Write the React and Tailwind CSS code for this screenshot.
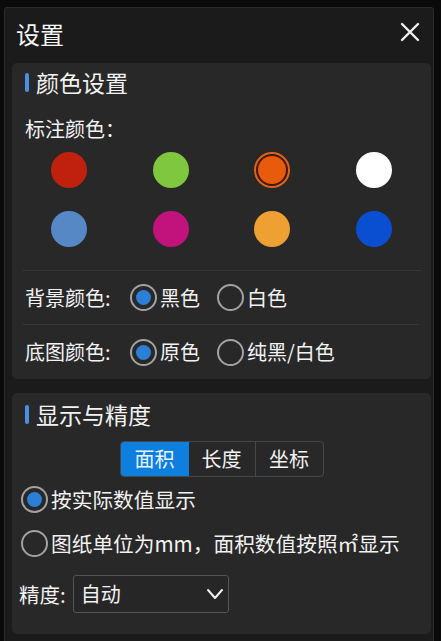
const FONT = { fontFamily: '"Noto Sans CJK SC", "Noto Sans", sans-serif' };

const MARK_COLORS = [
  '#c0210f',
  '#7ec73e',
  '#e85a0c',
  '#ffffff',
  '#5588c4',
  '#c2137c',
  '#eea033',
  '#0a4fd1',
];

function SectionTitle({ children }) {
  return (
    <div className="flex items-center h-[24px] pl-[13px]">
      <span className="w-[4px] h-[19px] rounded-[2px] bg-[#4a90e2]" />
      <span className="ml-[7px] text-[23px] leading-[24px] text-[#f2f2f2]">{children}</span>
    </div>
  );
}

function Radio({ checked }) {
  return (
    <span className="w-[27px] h-[27px] rounded-full border-2 border-[#a3a3a3] flex items-center justify-center shrink-0">
      {checked && <span className="w-[15px] h-[15px] rounded-full bg-[#2b7fd6]" />}
    </span>
  );
}

function Option({ checked, label, size = 'text-[20px]' }) {
  return (
    <div className="flex items-center gap-[3px]">
      <Radio checked={checked} />
      <span className={`${size} leading-[24px] text-[#f2f2f2]`}>{label}</span>
    </div>
  );
}

function OptionRow({ label, options, className }) {
  return (
    <div className={`flex items-center pl-[13px] ${className}`}>
      <span className="w-[105px] text-[20px] leading-[24px] text-[#f2f2f2]">{label}</span>
      <div className="flex items-center gap-[17px]">
        {options.map((o, i) => (
          <Option key={i} checked={i === 0} label={o} />
        ))}
      </div>
    </div>
  );
}

function Swatch({ color, selected }) {
  if (selected) {
    return (
      <span className="w-[36px] h-[36px] rounded-full border-2 border-[#e2621a] p-[2px] bg-[#3a1a0a]">
        <span className="block w-full h-full rounded-full bg-[#e85a0c]" />
      </span>
    );
  }
  return <span className="w-[36px] h-[36px] rounded-full" style={{ background: color }} />;
}

export default function App() {
  return (
    <div className="min-h-screen bg-[#0a0a0a] pt-[7px] pl-[4px] pr-[7px]" style={FONT}>
      <div className="h-[640px] border border-[#2c2c2c] rounded-t-[3px] bg-[#1b1b1b] pl-[7px] pr-[2px]">
        {/* Title */}
        <div className="h-[55px] flex items-start justify-between pt-[14px]">
          <span className="ml-[4px] text-[24px] leading-[24px] text-[#f5f5f5]">设置</span>
          <svg width="20" height="20" viewBox="0 0 20 20" className="mr-[11px]">
            <path d="M2 2 L18 18 M18 2 L2 18" stroke="#f0f0f0" strokeWidth="2.4" strokeLinecap="round" />
          </svg>
        </div>

        {/* Colour settings */}
        <div className="h-[316px] rounded-[5px] bg-[#282828] pt-[7px]">
          <SectionTitle>颜色设置</SectionTitle>
          <div className="mt-[23px] pl-[13px] text-[20px] leading-[24px] text-[#f2f2f2]">标注颜色：</div>
          <div className="mt-[11px] px-[6px] grid grid-cols-4 gap-y-[23px] justify-items-center">
            {MARK_COLORS.map((c, i) => (
              <Swatch key={i} color={c} selected={i === 2} />
            ))}
          </div>
          <div className="mt-[23px] mx-[10px] h-px bg-[#353535]" />
          <OptionRow className="h-[53px]" label="背景颜色:" options={['黑色', '白色']} />
          <div className="ml-[10px] mr-[12px] h-px bg-[#353535]" />
          <OptionRow className="h-[54px]" label="底图颜色:" options={['原色', '纯黑/白色']} />
        </div>

        {/* Display & precision */}
        <div className="mt-[14px] h-[241px] rounded-[5px] bg-[#282828] pt-[9px]">
          <SectionTitle>显示与精度</SectionTitle>
          <div className="mt-[15px] flex justify-center">
            <div className="flex h-[36px] rounded-[4px] border border-[#474747] overflow-hidden text-[20px]">
              <span className="w-[68px] flex items-center justify-center bg-[#0e7fdf] text-[#e8f4ff]">面积</span>
              <span className="w-[67px] flex items-center justify-center border-r border-[#474747] text-[#f2f2f2]">长度</span>
              <span className="w-[67px] flex items-center justify-center text-[#f2f2f2]">坐标</span>
            </div>
          </div>
          <div className="h-[44px] flex items-center pl-[9px]">
            <Option checked size="text-[20.7px]" label="按实际数值显示" />
          </div>
          <div className="h-[44px] flex items-center pl-[9px]">
            <Option size="text-[20.7px]" label="图纸单位为mm，面积数值按照㎡显示" />
          </div>
          <div className="mt-[10px] flex items-center pl-[7px] gap-[7px]">
            <span className="text-[20.5px] leading-[24px] text-[#f2f2f2]">精度:</span>
            <div className="w-[156px] h-[38px] rounded-[3px] border border-[#555] bg-[#262626] flex items-center justify-between pl-[7px] pr-[3px]">
              <span className="text-[20px] leading-[24px] text-[#f2f2f2]">自动</span>
              <svg width="20" height="20" viewBox="0 0 20 20">
                <path d="M3 6 L10 14 L17 6" fill="none" stroke="#f0f0f0" strokeWidth="2" strokeLinecap="round" strokeLinejoin="round" />
              </svg>
            </div>
          </div>
        </div>
      </div>
    </div>
  );
}
